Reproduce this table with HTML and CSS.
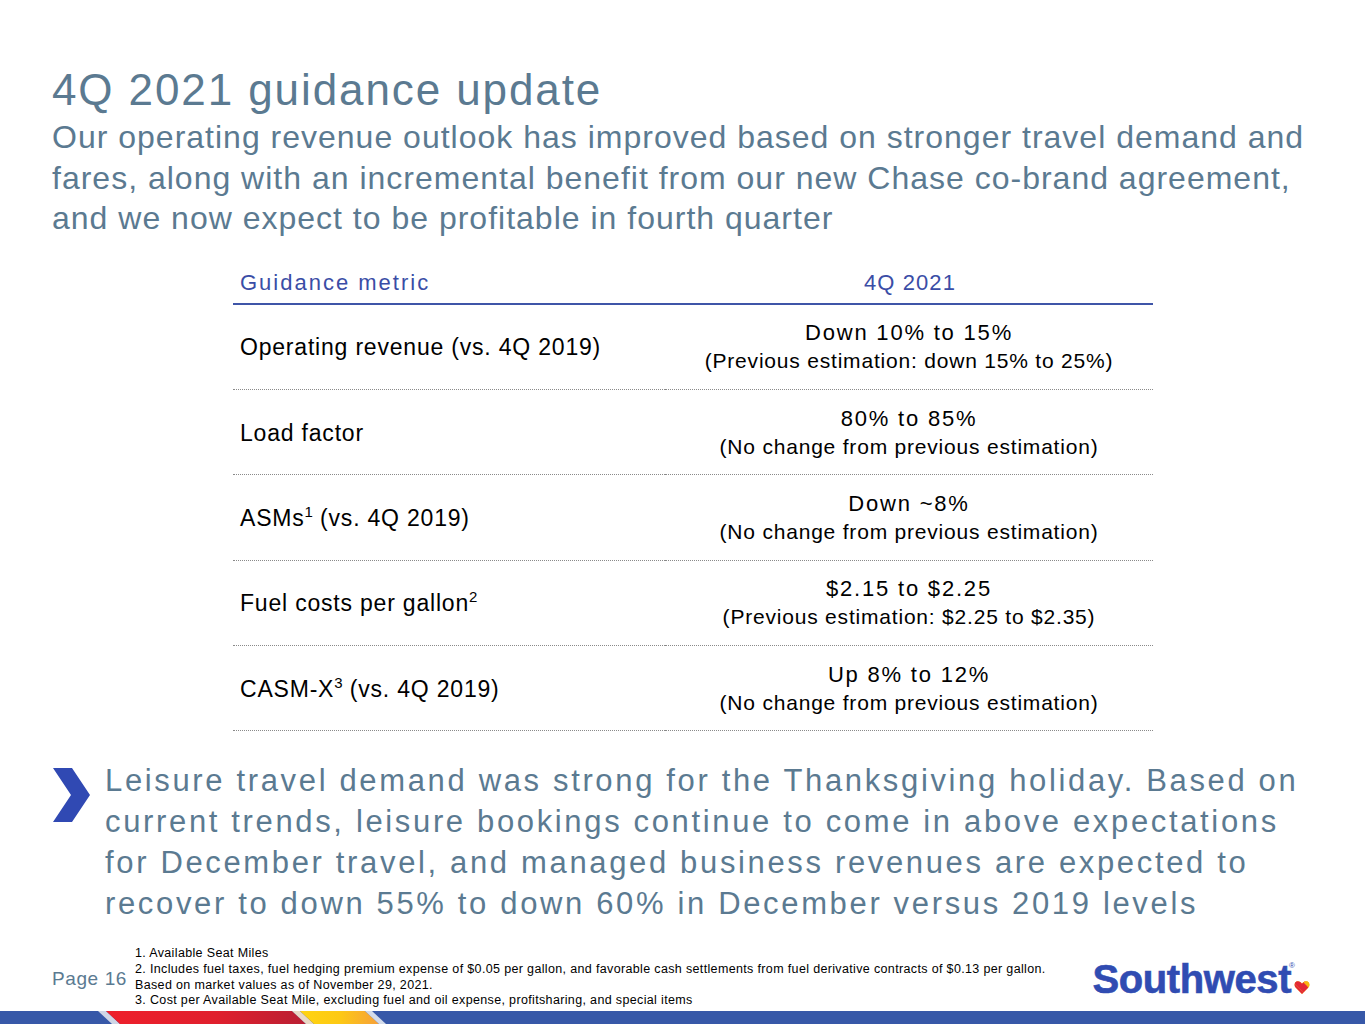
FILE: index.html
```html
<!DOCTYPE html>
<html lang="en">
<head>
<meta charset="utf-8">
<title>4Q 2021 guidance update</title>
<link rel="stylesheet" href="styles.css">
</head>
<body>
<div class="slide">
  <header class="head">
    <h1 class="title">4Q 2021 guidance update</h1>
    <p class="subtitle">Our operating revenue outlook has improved based on stronger travel demand and fares, along with an incremental benefit from our new Chase co-brand agreement, and we now expect to be profitable in fourth quarter</p>
  </header>

  <div class="table">
    <div class="th th-left">Guidance metric</div>
    <div class="th th-right">4Q 2021</div>

    <div class="td td-left"><span>Operating revenue (vs. 4Q 2019)</span></div>
    <div class="td td-right"><span class="main">Down 10% to 15%</span><span class="sub">(Previous estimation: down 15% to 25%)</span></div>

    <div class="td td-left"><span>Load factor</span></div>
    <div class="td td-right"><span class="main">80% to 85%</span><span class="sub">(No change from previous estimation)</span></div>

    <div class="td td-left"><span>ASMs<sup>1</sup> (vs. 4Q 2019)</span></div>
    <div class="td td-right"><span class="main">Down ~8%</span><span class="sub">(No change from previous estimation)</span></div>

    <div class="td td-left"><span>Fuel costs per gallon<sup>2</sup></span></div>
    <div class="td td-right"><span class="main">$2.15 to $2.25</span><span class="sub">(Previous estimation: $2.25 to $2.35)</span></div>

    <div class="td td-left"><span>CASM-X<sup>3</sup> (vs. 4Q 2019)</span></div>
    <div class="td td-right"><span class="main">Up 8% to 12%</span><span class="sub">(No change from previous estimation)</span></div>
  </div>

  <div class="bullet">
    <svg class="chevron" width="40" height="56" viewBox="0 0 40 56" aria-hidden="true">
      <polygon points="1,1 20,1 38,28 20,55 1,55 19,28" fill="#3049b3"/>
    </svg>
    <p class="bullet-text">Leisure travel demand was strong for the Thanksgiving holiday. Based on current trends, leisure bookings continue to come in above expectations for December travel, and managed business revenues are expected to recover to down 55% to down 60% in December versus 2019 levels</p>
  </div>

  <footer class="foot">
    <div class="page">Page 16</div>
    <div class="notes">
      <div>1. Available Seat Miles</div>
      <div>2. Includes fuel taxes, fuel hedging premium expense of $0.05 per gallon, and favorable cash settlements from fuel derivative contracts of $0.13 per gallon.</div>
      <div>Based on market values as of November 29, 2021.</div>
      <div>3. Cost per Available Seat Mile, excluding fuel and oil expense, profitsharing, and special items</div>
    </div>
    <div class="logo">
      <span class="logo-word">Southwest</span><span class="reg">®</span>
      <svg class="heart" width="16" height="16" viewBox="0 0 16 16" aria-hidden="true">
        <defs>
          <clipPath id="hc">
            <path d="M8 15 L1.6 8.4 C-0.4 6.2 0.6 2.2 3.8 2.2 C5.6 2.2 7 3.4 8 4.8 C9 3.4 10.4 2.2 12.2 2.2 C15.4 2.2 16.4 6.2 14.4 8.4 Z"/>
          </clipPath>
        </defs>
        <g clip-path="url(#hc)">
          <rect x="0" y="0" width="16" height="16" fill="#f9b612"/>
          <polygon points="0,4 0,10 9,16 12,16" fill="#e32936"/>
          <polygon points="0,9 0,16 8,16" fill="#304cb2"/>
          <polygon points="0,0 0,4 12,16 16,16 16,12 10,0" fill="#e32936"/>
          <polygon points="6,0 16,10 16,0" fill="#f9b612"/>
        </g>
      </svg>
    </div>
  </footer>

  <div class="stripe">
    <svg width="1365" height="13" viewBox="0 0 1365 13" preserveAspectRatio="none" aria-hidden="true">
      <defs>
        <linearGradient id="red" x1="0" x2="1" y1="0" y2="0">
          <stop offset="0" stop-color="#ee1f2b"/>
          <stop offset="0.55" stop-color="#e01f2d"/>
          <stop offset="1" stop-color="#b91f33"/>
        </linearGradient>
        <linearGradient id="yel" x1="0" x2="1" y1="0" y2="0">
          <stop offset="0" stop-color="#ffd411"/>
          <stop offset="0.5" stop-color="#fdc914"/>
          <stop offset="1" stop-color="#f6a03a"/>
        </linearGradient>
      </defs>
      <rect x="0" y="0" width="1365" height="13" fill="#3758a8"/>
      <polygon points="98,0 106,0 120,13 112,13" fill="#cfd6e6"/>
      <polygon points="106,0 292,0 306,13 120,13" fill="url(#red)"/>
      <polygon points="292,0 300,0 314,13 306,13" fill="#e9d9c6"/>
      <polygon points="300,0 365,0 379,13 314,13" fill="url(#yel)"/>
      <polygon points="365,0 372,0 386,13 379,13" fill="#d3dbea"/>
    </svg>
  </div>
</div>
</body>
</html>
```

FILE: styles.css
```css
* {
  box-sizing: border-box;
}

html, body {
  margin: 0;
  padding: 0;
  background: #ffffff;
}

.slide {
  width: 1365px;
  height: 1024px;
  display: flex;
  flex-direction: column;
  overflow: hidden;
  font-family: "Liberation Sans", Arial, sans-serif;
  background: #ffffff;
}

.head {
  padding: 66px 20px 0 52px;
}

.title {
  margin: 0;
  font-size: 44px;
  line-height: 48px;
  font-weight: normal;
  color: #5b7a91;
  letter-spacing: 1.9px;
}

.subtitle {
  margin: 3px 0 0 0;
  width: 1275px;
  font-size: 32px;
  line-height: 40.5px;
  color: #5b7a91;
  letter-spacing: 1px;
}

.table {
  margin: 31px 0 0 233px;
  width: 920px;
  display: grid;
  grid-template-columns: 432px 488px;
}

.th {
  font-size: 22px;
  line-height: 26px;
  color: #3a4da6;
  padding-bottom: 7px;
  border-bottom: 2px solid #3f55a8;
}

.th-left {
  padding-left: 7px;
  letter-spacing: 2px;
}

.th-right {
  text-align: center;
  letter-spacing: 1.1px;
  padding-left: 2px;
}

.td {
  height: 85.4px;
  border-bottom: 1px dotted #8a8a8a;
  color: #000000;
  display: flex;
  align-items: center;
}

.td-left {
  font-size: 23px;
  letter-spacing: 0.8px;
  padding-left: 7px;
  padding-top: 2px;
}

.td-right {
  flex-direction: column;
  justify-content: center;
  text-align: center;
}

.td-right .main {
  font-size: 22px;
  line-height: 29px;
  letter-spacing: 1.8px;
}

.td-right .sub {
  font-size: 21px;
  line-height: 28px;
  letter-spacing: 0.8px;
}

.td sup {
  font-size: 15px;
  line-height: 0;
  vertical-align: 9px;
  letter-spacing: 0;
}

.bullet {
  display: flex;
  align-items: flex-start;
  margin: 29px 0 0 52px;
}

.chevron {
  flex: none;
  margin-top: 7px;
}

.bullet-text {
  margin: 0 0 0 13px;
  width: 1205px;
  font-size: 31px;
  line-height: 41px;
  letter-spacing: 2.65px;
  color: #5b7a91;
}

.foot {
  display: flex;
  align-items: center;
  margin-top: 22px;
  padding: 0 55px 0 52px;
}

.page {
  flex: none;
  width: 83px;
  font-size: 19px;
  letter-spacing: 0.6px;
  color: #5b7a91;
  padding-top: 2px;
}

.notes {
  flex: 1;
  font-size: 12.5px;
  line-height: 15.6px;
  letter-spacing: 0.35px;
  color: #000000;
}

.logo {
  flex: none;
  display: flex;
  align-items: flex-end;
  padding-top: 2px;
}

.logo-word {
  font-size: 40px;
  line-height: 40px;
  font-weight: bold;
  color: #304cb2;
  letter-spacing: -0.4px;
  -webkit-text-stroke: 0.6px #304cb2;
}

.reg {
  font-size: 8px;
  color: #304cb2;
  align-self: flex-start;
  margin: 2px 0 0 -2px;
}

.heart {
  margin: 0 0 4px -1px;
}

.stripe {
  margin-top: auto;
  height: 13px;
  line-height: 0;
}
```
